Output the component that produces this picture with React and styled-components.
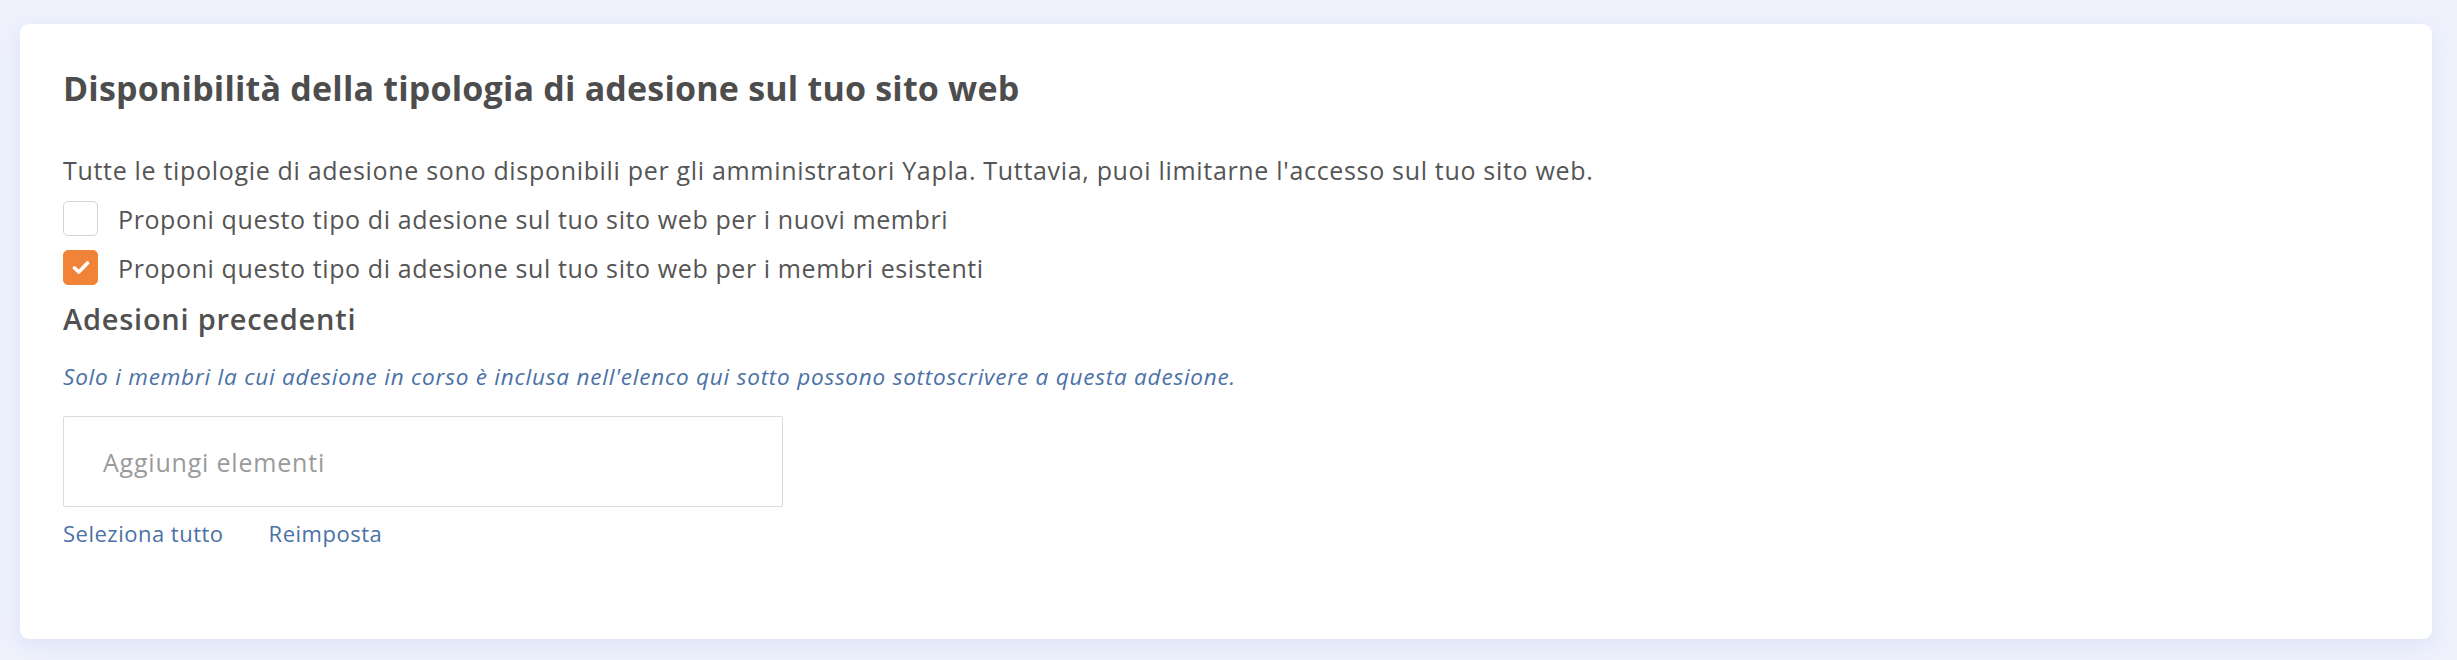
import React, { useState } from 'react'
import styled, { createGlobalStyle } from 'styled-components'

const GlobalStyle = createGlobalStyle`
  html, body {
    margin: 0;
    padding: 0;
    background: #eff2fc;
    font-family: "Open Sans", Lato, sans-serif;
  }
`

const Page = styled.div`
  min-height: 660px;
  box-sizing: border-box;
  padding: 24px 25px 21px 20px;
  background: #eff2fc;
`

const Card = styled.section`
  box-sizing: border-box;
  height: 615px;
  padding: 44px 43px 0;
  background: #fff;
  border-radius: 9px;
  box-shadow: 0 6px 22px rgba(120, 145, 230, 0.16);
  display: flex;
  flex-direction: column;
  align-items: flex-start;
`

const Title = styled.h2`
  margin: 0;
  font-size: 34px;
  line-height: 40px;
  font-weight: 700;
  letter-spacing: 0.2px;
  color: #4d4d4d;
`

const Intro = styled.p`
  margin: 47px 0 0;
  font-size: 25px;
  line-height: 30px;
  letter-spacing: 0.68px;
  color: #555;
`

const Options = styled.div`
  margin-top: 16px;
  display: flex;
  flex-direction: column;
  gap: 14px;
`

const Option = styled.label`
  display: flex;
  align-items: center;
  gap: 20px;
  height: 35px;
  font-size: 25px;
  line-height: 30px;
  letter-spacing: 0.6px;
  color: #555;
  cursor: pointer;
`

const Box = styled.span`
  box-sizing: border-box;
  width: 35px;
  height: 35px;
  border-radius: 5px;
  flex: none;
  display: flex;
  align-items: center;
  justify-content: center;
  background: ${p => (p.$checked ? '#f08337' : '#fff')};
  border: 1px solid ${p => (p.$checked ? '#f08337' : '#d3d3d3')};
`

const SubTitle = styled.h3`
  margin: 17px 0 0;
  font-size: 29px;
  line-height: 34px;
  font-weight: 600;
  letter-spacing: 0.75px;
  color: #505050;
`

const Hint = styled.p`
  margin: 27px 0 0;
  font-size: 22.5px;
  line-height: 28px;
  font-style: italic;
  letter-spacing: 0.79px;
  color: #4b71a6;
`

const Picker = styled.div`
  box-sizing: border-box;
  margin-top: 25px;
  width: 720px;
  height: 91px;
  border: 1px solid #dcdcdc;
  border-radius: 2px;
  padding: 0 39px;
  display: flex;
  align-items: center;
  font-size: 25px;
  line-height: 30px;
  letter-spacing: 0.8px;
  color: #9a9a9a;
`

const Links = styled.div`
  margin-top: 12px;
  display: flex;
  gap: 45px;
`

const LinkButton = styled.a`
  font-size: 22px;
  line-height: 28px;
  letter-spacing: 0.5px;
  color: #4b71a6;
  text-decoration: none;
  cursor: pointer;
`

const Check = () => (
  <svg width="18" height="15" viewBox="0 0 18 15" fill="none">
    <path d="M2.5 8 L6.8 12 L15.5 3" stroke="#fff" strokeWidth="3.6" strokeLinecap="round" strokeLinejoin="round" />
  </svg>
)

export default function App() {
  const [opts, setOpts] = useState({ nuovi: false, esistenti: true })
  const toggle = k => setOpts(o => ({ ...o, [k]: !o[k] }))

  return (
    <Page>
      <GlobalStyle />
      <Card>
        <Title>Disponibilità della tipologia di adesione sul tuo sito web</Title>
        <Intro>
          Tutte le tipologie di adesione sono disponibili per gli amministratori Yapla. Tuttavia, puoi limitarne l'accesso sul tuo sito web.
        </Intro>
        <Options>
          <Option onClick={() => toggle('nuovi')}>
            <Box $checked={opts.nuovi}>{opts.nuovi && <Check />}</Box>
            Proponi questo tipo di adesione sul tuo sito web per i nuovi membri
          </Option>
          <Option onClick={() => toggle('esistenti')}>
            <Box $checked={opts.esistenti}>{opts.esistenti && <Check />}</Box>
            Proponi questo tipo di adesione sul tuo sito web per i membri esistenti
          </Option>
        </Options>
        <SubTitle>Adesioni precedenti</SubTitle>
        <Hint>
          Solo i membri la cui adesione in corso è inclusa nell'elenco qui sotto possono sottoscrivere a questa adesione.
        </Hint>
        <Picker>Aggiungi elementi</Picker>
        <Links>
          <LinkButton>Seleziona tutto</LinkButton>
          <LinkButton>Reimposta</LinkButton>
        </Links>
      </Card>
    </Page>
  )
}
